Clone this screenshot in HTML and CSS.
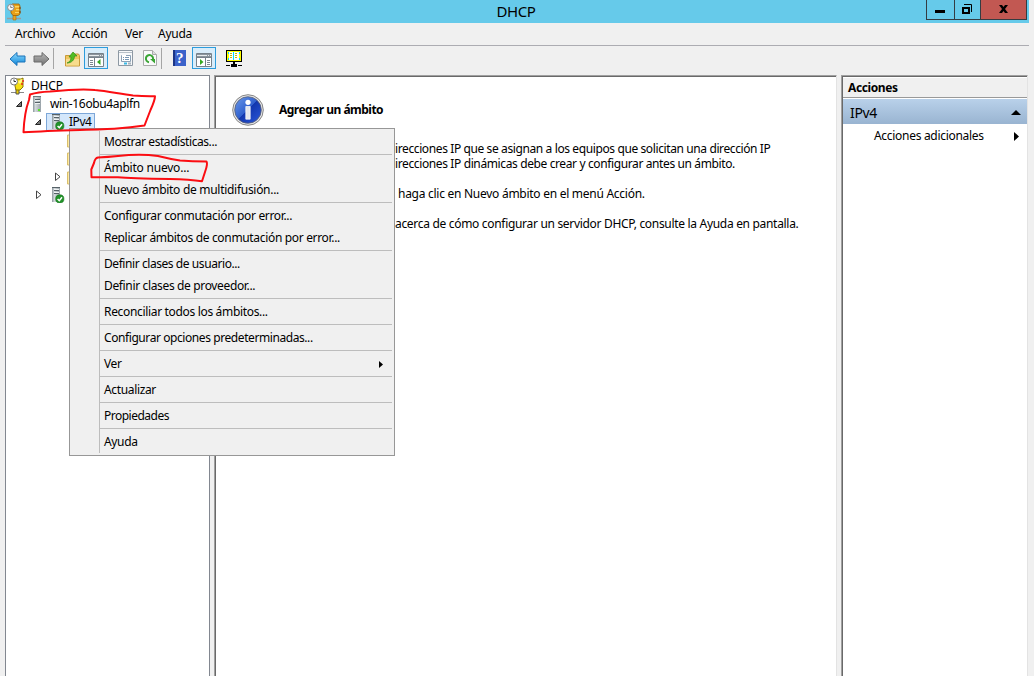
FILE: index.html
```html
<!DOCTYPE html>
<html lang="es">
<head>
<meta charset="utf-8">
<title>DHCP</title>
<link rel="stylesheet" href="styles.css">
</head>
<body>
<svg class="defs" width="0" height="0" aria-hidden="true">
  <defs>
    <linearGradient id="steel" x1="0" x2="1"><stop offset="0" stop-color="#8b959b"/><stop offset=".3" stop-color="#d3d9dc"/><stop offset="1" stop-color="#98a2a8"/></linearGradient>
    <linearGradient id="azure" x1="0" y1="0" x2="0" y2="1"><stop offset="0" stop-color="#8fdcff"/><stop offset="1" stop-color="#0c84d8"/></linearGradient>
    <linearGradient id="ash" x1="0" y1="0" x2="0" y2="1"><stop offset="0" stop-color="#bbb"/><stop offset="1" stop-color="#707070"/></linearGradient>
    <linearGradient id="royal" x1="0" y1="0" x2="1" y2="1"><stop offset="0" stop-color="#6c9bea"/><stop offset=".48" stop-color="#3060ce"/><stop offset=".5" stop-color="#1237ae"/><stop offset="1" stop-color="#2b59dc"/></linearGradient>
    <symbol id="server" viewBox="0 0 16 16">
      <path d="M4 0h8v16H4z" fill="url(#steel)"/><path d="M4 0h8v1H4z" fill="#6e777c"/>
      <path d="M6 3.500h5M6 6.500h5" stroke="#566268"/><path d="M6 4.500h5M6 7.500h5" stroke="#eef2f3"/>
      <path d="M9 13h2v2H9z" fill="#58e42c"/>
    </symbol>
    <symbol id="server-ok" viewBox="0 0 16 16">
      <path d="M3 0h8v15H3z" fill="url(#steel)"/><path d="M3 .5h8M5 3.500h5M5 6.500h5" stroke="#566268"/><path d="M5 2.500h5M5 5.500h5" stroke="#eef2f3"/>
      <circle cx="10.800" cy="11.900" r="4.100" fill="#219329" stroke="#14701b" stroke-width=".6"/><path d="M8.600 11.900l1.700 1.800 2.700-3.500" fill="none" stroke="#fff" stroke-width="1.500"/>
    </symbol>
    <symbol id="folder" viewBox="0 0 16 16"><path d="M.5 3h5l2 2h7v10H.5z" fill="#ffeaa0" stroke="#d9bf6c"/></symbol>
    <symbol id="open" viewBox="0 0 8 8"><path d="M6.500 1.500v5H1.500z" fill="#777" stroke="#262626"/></symbol>
    <symbol id="closed" viewBox="0 0 8 10"><path d="M1.500 1v7.500L6 4.750z" fill="#fff" stroke="#444"/></symbol>
  </defs>
</svg>

<div class="window">
  <header class="titlebar">
    <svg class="app-icon" width="16" height="18" viewBox="0 0 16 18">
      <path d="M0 15.500h14" stroke="#9c9c9c" stroke-width="1.500"/><path d="M6 12h3v5H6z" fill="#e9a522" stroke="#a36d12" stroke-width=".6"/>
      <path d="M5 1h7l1 2v8l-2 1.500H6L4 10V4z" fill="#e8a018" stroke="#9b5f0d" stroke-width=".8"/><path d="M8 3h4v1.500H8zM9 6h3v1.200H9zM8 9h4v1H8z" fill="#fbd45f"/><path d="M13 4v2M13 8v2" stroke="#783f09"/>
      <circle cx="3.800" cy="4.500" r="3.200" fill="#f5f5f5" stroke="#8b8b8b"/><path d="M3.700 2.500v2h2" fill="none" stroke="#666" stroke-width=".8"/>
    </svg>
    <h1 class="title">DHCP</h1>
    <div class="controls">
      <span class="control minimize"><svg width="10" height="3"><path d="M0 0h10v3H0z"/></svg></span>
      <span class="control restore"><svg width="11" height="11" viewBox="0 0 11 11" fill="none" stroke="#000"><path d="M1 4h6v5H1z" stroke-width="2"/><path d="M2 .5h7.500V8"/></svg></span>
      <span class="control close"><svg width="9" height="8" viewBox="0 0 9 8"><path d="M0 0h3l1.500 2L6 0h3L6 4l3 4H6L4.500 6 3 8H0l3-4z"/></svg></span>
    </div>
  </header>

  <nav class="menubar"><span class="m-archivo">Archivo</span><span class="m-accion">Acción</span><span class="m-ver">Ver</span><span>Ayuda</span></nav>

  <div class="toolbar">
    <svg class="tool back" width="17" height="16" viewBox="0 0 17 16"><path d="M1 8l7-6.500v3.500h8v6H8v3.500z" fill="url(#azure)" stroke="#1b72b8"/></svg>
    <svg class="tool next" width="17" height="16" viewBox="0 0 17 16"><path d="M16 8L9 1.500V5H1v6h8v3.500z" fill="url(#ash)" stroke="#6a6a6a"/></svg>
    <i class="divider"></i>
    <svg class="tool up" width="16" height="16" viewBox="0 0 16 16"><path d="M.5 4.500h8l1-1.500h4l1 1.500v10.500H.5z" fill="#f0c660" stroke="#c99a3a"/><path d="M1 8h13v6.500H1z" fill="#f7dc8d"/><path d="M2 12c3-1 4-3 4-6H4l4-5 4 4H9.500c0 4-3 7-7.500 7z" fill="#52bd24" stroke="#358f18" stroke-width=".7"/></svg>
    <span class="pressed tree-toggle"><svg width="16" height="14" viewBox="0 0 16 14"><path d="M.5.5h15v13H.5z" fill="#fff" stroke="#76818a"/><path d="M1 1h14v3H1z" fill="#8b959d"/><path d="M1 2.500h10M12 2.500h1M14 2.500h1" stroke="#e8ecee"/><path d="M1 4.500h14M6.500 5v8" stroke="#76818a"/><path d="M2 7.500h3M2 9.500h3M2 11.500h3" stroke="#7d8890"/><path d="M12.500 6v6L9 9z" fill="#35a820"/></svg></span>
    <svg class="tool props" width="16" height="16" viewBox="0 0 16 16"><path d="M.5.5h14v15H.5z" fill="#f7f8fa" stroke="#8d98a3"/><path d="M1 2.500h13" stroke="#b7c0c8"/><path d="M3.500 5.500h9v6h-9z" fill="#fff" stroke="#8ba0b5"/><path d="M4 5.500h4" stroke="#fff"/><path d="M5 7.500h1M7 7.500h4M5 9.500h1M7 9.500h4" stroke="#7896b4"/><path d="M6 13.500h3" stroke="#38b9e5" stroke-width="2"/><path d="M10 13.500h3" stroke="#a8b4bd" stroke-width="2"/></svg>
    <svg class="tool refresh" width="14" height="16" viewBox="0 0 14 16"><path d="M.5.5h9l4 4v11H.5z" fill="#fafafa" stroke="#aaa"/><path d="M9.500.5v4h4" fill="#ddd" stroke="#aaa"/><path d="M6 12.200A3.600 3.600 0 1 1 10 9.500" fill="none" stroke="#3aa534" stroke-width="2"/><path d="M7 9h5v4.500z" fill="#3aa534"/></svg>
    <i class="divider second"></i>
    <span class="help">?</span>
    <span class="pressed pane-toggle"><svg width="16" height="14" viewBox="0 0 16 14"><path d="M.5.5h15v13H.5z" fill="#fff" stroke="#76818a"/><path d="M1 1h14v3H1z" fill="#8b959d"/><path d="M1 2.500h10M12 2.500h1M14 2.500h1" stroke="#e8ecee"/><path d="M1 4.500h14M9.500 5v8" stroke="#76818a"/><path d="M11 7.500h3M11 9.500h3M11 11.500h3" stroke="#7d8890"/><path d="M4 6v6l3.500-3z" fill="#35a820"/></svg></span>
    <svg class="tool monitor" width="16" height="17" viewBox="0 0 16 17" shape-rendering="crispEdges"><path d="M0 0h16v12H0z"/><path d="M1 1h14v10H1z" fill="#ff0"/><path d="M3 2h10v8H3z" fill="#fff"/><path d="M2 2h1v2H2zM13 2h1v2h-1zM2 8h1v2H2zM13 8h1v2h-1zM7 2h1v8H7z" fill="#0df"/><path d="M4 3h2v1H4zM4 5h2v1H4zM4 7h2v1H4zM9 3h2v1H9zM9 5h2v1H9zM9 7h2v1H9z" fill="#c7b800"/><path d="M7 12h2v2H7zM0 15h4v1H0zM5 14h6v3H5zM12 15h4v1h-4z"/></svg>
  </div>

  <main class="panes">
    <section class="tree">
      <div class="row root"><svg class="dhcp-icon" width="16" height="18" viewBox="0 0 16 18"><path d="M1 15.500h13" stroke="#888"/><path d="M6 12h3v5H6z" fill="#eacb00" stroke="#555"/><path d="M5 2h6l2-1v9l-3 3H6L5 9z" fill="#f5df14" stroke="#8a7600"/><path d="M8 5l3-3 2 1-3 4z" fill="#fff68b"/><path d="M13 3v2M12 6v2" stroke="#e5271c" stroke-width="1.500"/><circle cx="4" cy="4.500" r="3.500" fill="#fff" stroke="#777"/><path d="M4 2.500v2h2" fill="none" stroke="#333"/></svg><span>DHCP</span></div>
      <div class="row host"><svg width="8" height="8"><use href="#open"/></svg><svg width="16" height="16"><use href="#server"/></svg><span>win-16obu4aplfn</span></div>
      <div class="row ipv4"><svg width="8" height="8"><use href="#open"/></svg><div class="selected"><svg width="16" height="16"><use href="#server-ok"/></svg><span>IPv4</span></div></div>
      <div class="row child"><svg width="16" height="16"><use href="#folder"/></svg></div>
      <div class="row child"><svg width="16" height="16"><use href="#folder"/></svg></div>
      <div class="row child branch"><svg width="8" height="10"><use href="#closed"/></svg><svg width="16" height="16"><use href="#folder"/></svg></div>
      <div class="row ipv6"><svg width="8" height="10"><use href="#closed"/></svg><svg width="16" height="16"><use href="#server-ok"/></svg></div>
    </section>

    <section class="content">
      <div class="heading">
        <svg width="32" height="32" viewBox="0 0 32 32"><circle cx="16" cy="16" r="15.300" fill="#e6e6e6" stroke="#858585"/><circle cx="16" cy="16" r="13.300" fill="url(#royal)" stroke="#596074" stroke-width=".8"/><circle cx="16" cy="8.300" r="2.600" fill="#fff"/><path d="M13.800 12.500h4.400v12.700h-4.400z" fill="#e4e7ed" stroke="#fff" stroke-width=".7"/></svg>
        <h2>Agregar un ámbito</h2>
      </div>
      <div class="copy">
        <p class="p1">irecciones IP que se asignan a los equipos que solicitan una dirección IP</p>
        <p class="p2">irecciones IP dinámicas debe crear y configurar antes un ámbito.</p>
        <p class="p3">haga clic en Nuevo ámbito en el menú Acción.</p>
        <p class="p4">acerca de cómo configurar un servidor DHCP, consulte la Ayuda en pantalla.</p>
      </div>
    </section>

    <aside class="actions">
      <h3>Acciones</h3>
      <div class="group"><span>IPv4</span><svg width="10" height="5"><path d="M0 5L5 0l5 5z"/></svg></div>
      <div class="more"><span>Acciones adicionales</span><svg width="5" height="9"><path d="M0 0l5 4.500L0 9z"/></svg></div>
    </aside>
  </main>
</div>

<ul class="context-menu">
  <li class="tight">Mostrar estadísticas...</li>
  <li class="sep"></li>
  <li class="wide">Ámbito nuevo...</li>
  <li class="loose">Nuevo ámbito de multidifusión...</li>
  <li class="sep"></li>
  <li class="normal">Configurar conmutación por error...</li>
  <li class="normal">Replicar ámbitos de conmutación por error...</li>
  <li class="sep"></li>
  <li class="tight">Definir clases de usuario...</li>
  <li>Definir clases de proveedor...</li>
  <li class="sep"></li>
  <li class="normal">Reconciliar todos los ámbitos...</li>
  <li class="sep"></li>
  <li class="snug">Configurar opciones predeterminadas...</li>
  <li class="sep"></li>
  <li>Ver<svg class="submenu" width="4" height="7"><path d="M0 0l4 3.500L0 7z"/></svg></li>
  <li class="sep"></li>
  <li>Actualizar</li>
  <li class="sep"></li>
  <li class="narrow">Propiedades</li>
  <li class="sep"></li>
  <li>Ayuda</li>
</ul>

<svg class="ink" width="220" height="200" viewBox="0 0 220 200">
  <path d="M23.500 132.300C24 120 26 108 29 100L30 94.500Q38 92 50 91.500C65 90 82 88.500 95 90C108 91 120 94 133 95.500Q145 96.500 155 96.200Q155 100 150.500 110L144.500 125.500Q130 127.500 117 128.500C95 130 60 130 23.500 132.300z"/>
  <path d="M91.500 177.300L91.300 169.500L94 163Q95 158 98 157.500Q108 157 118 156Q140 153.500 158 156Q170 159 180 160.500Q192 161.300 206.500 161.500Q208 164 205 172L202 181.300Q190 179.500 170 179Q130 178.500 118 177.300z"/>
</svg>
</body>
</html>
```
FILE: styles.css
```css
* { box-sizing: border-box; }
body { margin: 0; background: #f0f0f0; color: #000; font: 12px/18px "Noto Sans", "Open Sans", sans-serif; letter-spacing: -0.35px; overflow: hidden; }
h1, h2, h3, p, ul { margin: 0; padding: 0; }
svg { display: block; flex: none; }
.defs { position: absolute; }
.window { height: 676px; padding: 0 5px; display: flex; flex-direction: column; }

.titlebar { height: 23px; background: #66caea; display: grid; grid-template-columns: 101px 1fr 103px; flex: none; }
.app-icon { margin: 3px 0 0 2px; }
.title { font-size: 15px; font-weight: 400; line-height: 23px; text-align: center; letter-spacing: -0.4px; }
.controls { height: 20px; display: flex; border: 1px solid #343c42; border-top: 0; margin: 0 2px 0 0; }
.control { display: flex; justify-content: center; border-right: 1px solid #343c42; }
.minimize { width: 28px; padding: 10px 2px 0 0; }
.restore { width: 26px; padding-top: 4px; }
.close { flex: 1; padding: 5px 1px 0 0; background: #c25852; border: 0; }

.menubar { height: 23px; border-bottom: 1px solid #acacb2; display: flex; padding: 2px 0 0 10px; flex: none; }
.menubar span { white-space: nowrap; letter-spacing: -0.25px; }
.m-archivo { width: 57px; }
.m-accion { width: 53px; }
.m-ver { width: 33px; }

.toolbar { height: 29px; display: flex; align-items: flex-start; padding-left: 4px; flex: none; }
.tool { margin-top: 5px; }
.next { margin-left: 7px; }
.divider { width: 1px; height: 21px; margin: 2px 0 0 3px; background: #a5a5a5; }
.up { margin-left: 11px; }
.pressed { width: 24px; height: 22px; border: 1px solid #2d9cdc; background: #d9edfa; padding: 5px 0 0 3px; margin-top: 1px; }
.tree-toggle { margin-left: 3px; }
.props { margin-left: 10px; margin-top: 4px; }
.refresh { margin-left: 9px; margin-top: 4px; }
.divider.second { margin-left: 4px; }
.help { width: 13px; height: 16px; margin: 4px 0 0 11px; background: linear-gradient(90deg, #1c3585 15%, #3b62ca 16%); color: #fff; font: bold 15px/16px "Liberation Serif", serif; text-align: center; }
.pane-toggle { margin-left: 6px; }
.monitor { margin: 4px 0 0 10px; }

.panes { flex: 1; min-height: 0; display: grid; grid-template-columns: 209px 627px 187px; }
.tree { width: 205px; border: solid #828790; border-width: 1px 1px 0; background: #fff; padding-top: 1px; }
.row { height: 18px; display: flex; align-items: center; }
.root { padding-left: 4px; }
.root span { margin-left: 5px; letter-spacing: -0.2px; }
.host { padding-left: 9px; }
.host > svg + svg { margin-left: 6px; }
.host span { margin-left: 5px; letter-spacing: -0.36px; }
.ipv4 { padding-left: 28px; }
.selected { height: 18px; width: 49px; margin-left: 4px; padding-left: 2px; display: flex; align-items: center; background: #d4e7fb; border: 1px solid #7da7d9; }
.selected span { margin-left: 4px; letter-spacing: -0.45px; }
.child { padding-left: 61px; }
.branch { padding-left: 48px; padding-top: 2px; }
.branch svg + svg { margin-left: 5px; }
.ipv6 { padding: 2px 0 0 29px; }
.ipv6 svg + svg { margin-left: 6px; }

.content { border: solid; border-width: 1px 1px 0; border-color: #a0a0a0 #e3e3e3 #fff #a0a0a0; box-shadow: inset 1px 1px #696969; background: #fff; padding: 18px 0 0 17px; width: 623px; }
.heading { height: 32px; display: flex; align-items: center; }
.heading h2 { font-size: 12px; margin-left: 15px; letter-spacing: -0.52px; }
.copy { padding: 15px 0 0 163px; line-height: 15px; white-space: nowrap; }
.p1 { letter-spacing: -0.39px; }
.p2 { letter-spacing: -0.38px; }
.p3, .p4 { margin-top: 15px; }
.p3 { padding-left: 3px; letter-spacing: -0.27px; }
.p4 { letter-spacing: -0.31px; }

.actions { border: solid; border-width: 1px 1px 0; border-color: #a0a0a0 #e3e3e3 #fff #a0a0a0; box-shadow: inset 1px 1px #696969; background: #fff; padding: 2px 0 0 1px; }
.actions h3 { height: 20px; padding: 1px 0 0 5px; background: #f0f0f0; border-bottom: 1px solid #999; font-size: 12px; letter-spacing: -0.4px; }
.group { height: 25px; margin-top: 1px; padding: 2px 6px 0 7px; background: linear-gradient(#b9d1ea, #99b4d1); display: flex; align-items: center; justify-content: space-between; font-size: 14px; }
.more { height: 24px; padding: 0 8px 0 31px; display: flex; align-items: center; justify-content: space-between; letter-spacing: -0.3px; }

.context-menu { position: absolute; left: 69px; top: 128px; width: 326px; height: 328px; padding: 2px; border: 1px solid #979797; background: #f0f0f0; list-style: none; }
.context-menu li { height: 22px; margin-left: 27px; border-left: 1px solid #bdbdbd; padding-left: 4px; line-height: 22px; white-space: nowrap; display: flex; align-items: center; justify-content: space-between; }
.context-menu .sep { height: 4px; background: linear-gradient(#bdbdbd, #bdbdbd) 0 1px / 100% 1px no-repeat; }
.context-menu .tight { letter-spacing: -0.43px; }
.context-menu .snug { letter-spacing: -0.42px; }
.context-menu .narrow { letter-spacing: -0.5px; }
.context-menu .normal { letter-spacing: -0.33px; }
.context-menu .loose { letter-spacing: -0.29px; }
.context-menu .wide { letter-spacing: -0.22px; }
.submenu { margin-right: 9px; }
.ink { position: absolute; left: 0; top: 0; fill: none; stroke: #fb0d12; stroke-width: 2; stroke-linejoin: round; pointer-events: none; }
```
